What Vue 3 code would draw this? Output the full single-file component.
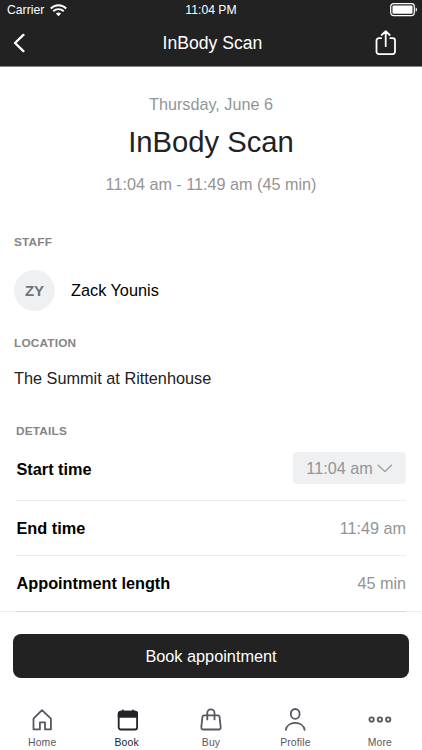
<script setup>
const details = [
  { label: 'End time', value: '11:49 am' },
  { label: 'Appointment length', value: '45 min' },
]
const tabs = ['Home', 'Book', 'Buy', 'Profile', 'More']
</script>

<template>
  <div class="screen">
    <header class="header">
      <div class="status">
        <span class="carrier">
          <span>Carrier</span>
          <svg class="wifi" width="17" height="13" viewBox="0 0 17 13" fill="none" stroke="#fff" stroke-width="1.9">
            <path d="M.8 4.5c4.3-4.3 11.1-4.3 15.4 0M3.3 7.3c3-2.9 7.4-2.9 10.4 0" />
            <path d="M8.5 12.2 5.9 9.6c1.5-1.4 3.7-1.4 5.2 0z" fill="#fff" stroke="none" />
          </svg>
        </span>
        <span class="clock">11:04 PM</span>
        <svg class="battery" width="28" height="14" viewBox="0 0 28 14">
          <rect x=".7" y=".7" width="23.6" height="11.9" rx="2.8" fill="none" stroke="#fff" stroke-width="1.2" />
          <rect x="2.5" y="2.5" width="20" height="8.3" rx="1" fill="#fff" />
          <path d="M25.7 4.5c1.7.6 1.7 3.7 0 4.3z" fill="#fff" />
        </svg>
      </div>
      <div class="nav">
        <svg class="back" width="12" height="20" viewBox="0 0 12 20" fill="none" stroke="#fff" stroke-width="2.3" stroke-linecap="round" stroke-linejoin="round">
          <path d="M10.4 1.9 2 10l8.4 8.1" />
        </svg>
        <h1 class="nav-title">InBody Scan</h1>
        <svg class="share" width="22" height="26" viewBox="0 0 22 26" fill="none" stroke="#fff" stroke-width="1.8" stroke-linecap="round" stroke-linejoin="round">
          <path d="M6.2 8.2H3.9a2.4 2.4 0 0 0-2.4 2.4v11.1a2.4 2.4 0 0 0 2.4 2.4h13.7a2.4 2.4 0 0 0 2.4-2.4V10.6a2.4 2.4 0 0 0-2.4-2.4h-2.3M10.7 16.2V1.5M6.7 5l4-3.8 4 3.8" />
        </svg>
      </div>
    </header>

    <main class="content">
      <section class="summary">
        <p class="date">Thursday, June 6</p>
        <h2 class="title">InBody Scan</h2>
        <p class="time">11:04 am - 11:49 am (45 min)</p>
      </section>

      <section class="staff">
        <h3 class="label">STAFF</h3>
        <div class="person">
          <span class="avatar">ZY</span>
          <span class="name">Zack Younis</span>
        </div>
      </section>

      <section class="location">
        <h3 class="label">LOCATION</h3>
        <p class="place">The Summit at Rittenhouse</p>
      </section>

      <section class="details">
        <h3 class="label">DETAILS</h3>
        <div class="row start">
          <span class="key">Start time</span>
          <button class="picker">
            <span>11:04 am</span>
            <svg width="16" height="10" viewBox="0 0 16 10" fill="none" stroke="#949497" stroke-width="1.2" stroke-linecap="round" stroke-linejoin="round">
              <path d="m1.2 2.2 6.7 6.4 6.5-6.4" />
            </svg>
          </button>
        </div>
        <div v-for="d in details" :key="d.label" class="row">
          <span class="key">{{ d.label }}</span>
          <span class="value">{{ d.value }}</span>
        </div>
      </section>
    </main>

    <div class="action">
      <button class="book">Book appointment</button>
    </div>

    <nav class="tabs">
      <a v-for="t in tabs" :key="t" class="tab" :class="{ active: t === 'Book' }">
        <svg width="26" height="26" viewBox="0 0 26 26" fill="none" stroke="currentColor" stroke-width="1.8" stroke-linejoin="round" stroke-linecap="round">
          <path v-if="t === 'Home'" d="M4.5 11.6 13 3.2l8.9 8.4v10.8H16v-7.1h-5.1v7.1H4.5z" />
          <template v-else-if="t === 'Book'">
            <rect x="4.7" y="4.7" width="18.4" height="17.8" rx="2" />
            <path d="M4.7 9.9V6.7a2 2 0 0 1 2-2h14.4a2 2 0 0 1 2 2v3.2z" fill="currentColor" />
            <path d="M8.9 3.3v3M19 3.3v3" />
          </template>
          <template v-else-if="t === 'Buy'">
            <path d="M6 8.3h14c.8 0 1.3.4 1.5 1.2l1.2 10.7c.2 1.4-.6 2.3-2 2.3H5.3c-1.4 0-2.2-.9-2-2.3L4.5 9.5C4.7 8.7 5.2 8.3 6 8.3z" />
            <path d="M9.3 12.4V5.9a3.6 3.6 0 0 1 7.2 0v6.5" />
          </template>
          <template v-else-if="t === 'Profile'">
            <ellipse cx="13.2" cy="6.9" rx="4.4" ry="4.9" />
            <path d="M3.9 22.8c1.3-9.2 17.2-9.2 18.7 0" />
          </template>
          <template v-else>
            <circle cx="4.6" cy="12.5" r="2.2" />
            <circle cx="12.9" cy="12.5" r="2.2" />
            <circle cx="21.2" cy="12.5" r="2.2" />
          </template>
        </svg>
        <span>{{ t }}</span>
      </a>
    </nav>
  </div>
</template>

<style>
body {
  margin: 0;
  background: #fff;
}
</style>

<style scoped>
.screen {
  display: flex;
  flex-direction: column;
  width: 422px;
  height: 750px;
  overflow: hidden;
  background: #fff;
  font-family: "Liberation Sans", Arial, sans-serif;
}
h1, h2, h3, p {
  margin: 0;
  font-weight: 400;
}
button {
  border: 0;
  padding: 0;
  font-family: inherit;
}
svg {
  display: block;
  flex: none;
}
.header {
  box-sizing: border-box;
  height: 67px;
  background: #222;
  border-bottom: 1px solid #858585;
  color: #fff;
}
.status {
  display: grid;
  grid-template-columns: 1fr auto 1fr;
  align-items: center;
  height: 20px;
  padding: 0 4px 0 7px;
  font-size: 12.2px;
}
.carrier {
  display: flex;
  align-items: center;
  gap: 6px;
}
.clock {
  margin-right: 3px;
}
.battery {
  justify-self: end;
}
.nav {
  display: grid;
  grid-template-columns: 1fr auto 1fr;
  align-items: center;
  height: 45px;
  padding: 0 25px 0 13px;
}
.nav-title {
  padding-left: 15px;
  font-size: 17.6px;
  line-height: 20px;
}
.share {
  justify-self: end;
}
.content {
  flex: none;
}
.summary {
  text-align: center;
  color: #949494;
  font-size: 16.2px;
  line-height: 20px;
  padding-top: 27px;
}
.title {
  color: #222;
  font-size: 29.2px;
  line-height: 36px;
  margin: 10px 0 14px;
}
.label {
  color: #858585;
  font-size: 11.8px;
  line-height: 14px;
  font-weight: 700;
  letter-spacing: 0.2px;
}
.staff {
  padding: 41px 14px 0;
}
.person {
  display: flex;
  align-items: center;
  gap: 16px;
  margin-top: 21px;
}
.avatar {
  display: flex;
  align-items: center;
  justify-content: center;
  width: 41px;
  height: 41px;
  border-radius: 50%;
  background: #eff0f2;
  color: #70737c;
  font-size: 15px;
  font-weight: 700;
}
.name {
  color: #000;
  font-size: 16.3px;
}
.location {
  padding: 25px 14px 0;
}
.place {
  margin-top: 18px;
  color: #222;
  font-size: 16.3px;
  line-height: 20px;
}
.details {
  padding: 36px 16px 0;
}
.row {
  display: flex;
  align-items: center;
  justify-content: space-between;
  box-sizing: border-box;
  height: 55px;
  border-bottom: 1px solid #ededed;
  font-size: 16.2px;
}
.row.start {
  height: 63px;
}
.row:last-child {
  border-bottom-color: #d8d8da;
}
.key {
  padding-left: 0.5px;
  color: #000;
  font-size: 16.3px;
  font-weight: 700;
}
.value {
  color: #949494;
}
.picker {
  display: flex;
  align-items: center;
  justify-content: center;
  gap: 4px;
  width: 113px;
  height: 32px;
  margin-bottom: 2px;
  border-radius: 4px;
  background: #eff0f2;
  color: #949497;
  font-size: 16.2px;
}
.action {
  padding: 22px 13px 0;
  border-top: 1px solid #efefef;
}
/* The divider of the last row lies on the top edge of the action bar. */
.details .row:last-child {
  position: relative;
  height: 56px;
  margin-bottom: -1px;
}
.book {
  display: block;
  width: 100%;
  height: 44px;
  border-radius: 8px;
  background: #222;
  color: #fff;
  font-size: 16.3px;
}
.tabs {
  display: grid;
  grid-template-columns: repeat(5, 1fr);
  margin-top: 29px;
}
.tab {
  display: flex;
  flex-direction: column;
  align-items: center;
  gap: 3px;
  color: #555860;
  font-size: 10.4px;
  line-height: 13px;
  letter-spacing: 0.15px;
}
.tab.active {
  color: #222228;
}
</style>
